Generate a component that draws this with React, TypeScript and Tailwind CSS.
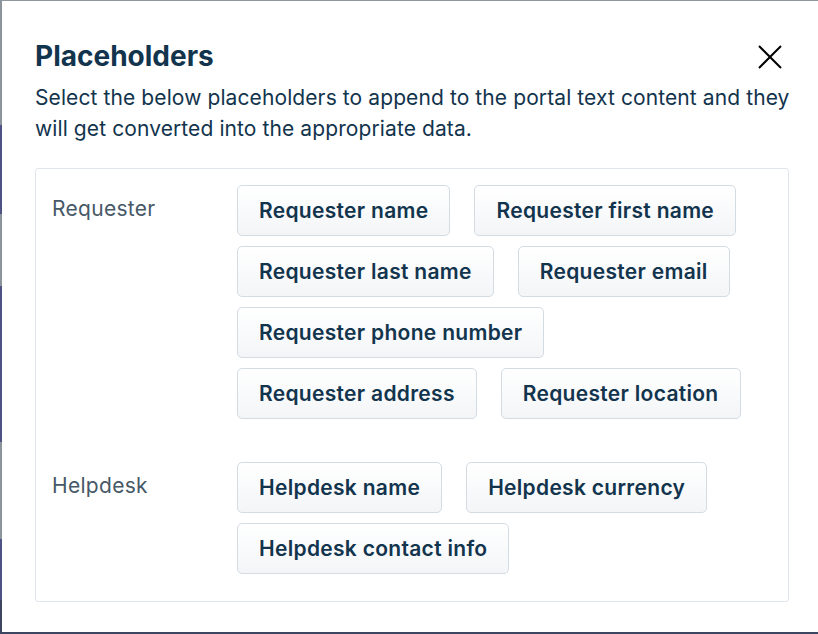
const groups = [
  {
    id: 0,
    label: 'Requester',
    rows: [
      ['Requester name', 'Requester first name'],
      ['Requester last name', 'Requester email'],
      ['Requester phone number'],
      ['Requester address', 'Requester location'],
    ],
  },
  {
    id: 1,
    label: 'Helpdesk',
    rows: [['Helpdesk name', 'Helpdesk currency'], ['Helpdesk contact info']],
  },
];

function Chip({ text }: { text: string }) {
  return (
    <button
      type="button"
      className="h-[51px] px-[21px] rounded-[5px] border border-[#d3dbe3] bg-gradient-to-b from-white to-[#f3f5f7] text-[21px] tracking-[0.3px] font-semibold text-[#12344d] leading-none whitespace-nowrap"
    >
      {text}
    </button>
  );
}

function App() {
  return (
    <div className="w-[818px] h-[634px] flex flex-col bg-white font-['Inter',sans-serif] overflow-hidden">
      <div className="h-px bg-[#8e979f]" />
      <div className="flex flex-1 min-h-0">
        {/* page behind the modal */}
        <div className="w-[2px] flex flex-col">
          <div className="h-[124px] bg-[#8b949b]" />
          <div className="h-[89px] bg-[#4d5384]" />
          <div className="h-[72px] bg-[#8b949b]" />
          <div className="h-[156px] bg-[#4d5384]" />
          <div className="h-[97px] bg-[#8b949b]" />
          <div className="h-[61px] bg-[#4d5384]" />
          <div className="flex-1 bg-[#3d4660]" />
        </div>
        <div className="flex-1 bg-white pl-[33px] pr-[27px] pt-[38px]">
          <div className="flex items-start justify-between">
            <h2 className="text-[28px] leading-[34px] font-bold text-[#12344d]">Placeholders</h2>
            <button type="button" className="mt-[6px] mr-[9px] text-black">
              <svg width="24" height="24" viewBox="0 0 24 24" fill="none">
                <path d="M1 1 23 23M23 1 1 23" stroke="currentColor" strokeWidth="2" />
              </svg>
            </button>
          </div>
          <p className="mt-[9px] text-[21px] tracking-[0.1px] leading-[31px] text-[#12344d]">
            Select the below placeholders to append to the portal text content and they will get
            converted into the appropriate data.
          </p>
          <div className="mt-[24px] mr-[2px] border border-[#dfe5eb] rounded-[3px] px-[16px] pt-[16px] pb-[27px] flex flex-col gap-[43px]">
            {groups.map(g => (
              <div key={g.id} className="flex">
                <span className="w-[185px] pt-[10px] text-[21px] tracking-[0.3px] leading-[28px] text-[#475867]">
                  {g.label}
                </span>
                <div className="flex flex-col gap-[10px]">
                  {g.rows.map((row, i) => (
                    <div key={i} className="flex gap-[24px]">
                      {row.map(t => (
                        <Chip key={t} text={t} />
                      ))}
                    </div>
                  ))}
                </div>
              </div>
            ))}
          </div>
        </div>
      </div>
      <div className="h-[2px] bg-[#3d4660]" />
    </div>
  );
}

export default App;
